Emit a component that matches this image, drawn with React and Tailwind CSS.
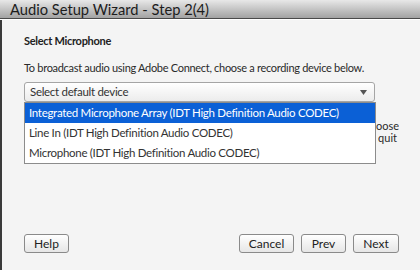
export default function App() {
  const items = [
    "Integrated Microphone Array (IDT High Definition Audio CODEC)",
    "Line In (IDT High Definition Audio CODEC)",
    "Microphone (IDT High Definition Audio CODEC)",
  ];

  return (
    <div
      className="w-[420px] h-[270px] flex flex-col bg-[#f4f4f4] text-[#2a2a2a] overflow-hidden"
      style={{ fontFamily: "Lato, 'Open Sans', sans-serif" }}
    >
      {/* Title bar */}
      <div className="h-[19px] shrink-0 flex items-center pl-[10px] bg-gradient-to-b from-[#e8e8e8] to-[#a3a3a3] border-b border-[#4a4a4a]">
        <span className="text-[14.7px] leading-none text-[#1c1c1c]">Audio Setup Wizard - Step 2(4)</span>
      </div>
      <div className="h-px bg-white shrink-0"></div>

      <div className="flex-1 flex">
        <div className="w-[2px] bg-[#3a3a3a]"></div>

        <div className="flex-1 flex flex-col pl-[22px] pr-[21px] pt-[14px] pb-[17px]">
          <div className="text-[11px] leading-[14px] font-bold tracking-[-0.3px] text-[#222]">Select Microphone</div>

          <div className="mt-[13px] text-[11px] leading-[14px] tracking-[-0.3px]">
            To broadcast audio using Adobe Connect, choose a recording device below.
          </div>

          <div className="relative mt-[7px] w-[351px]">
            <div className="h-[20px] flex items-center justify-between pl-[5px] pr-[7px] border border-[#a5a5a5] rounded-[3px] bg-gradient-to-b from-white to-[#ececec]">
              <span className="text-[11.5px] leading-none tracking-[-0.3px] text-[#333]">Select default device</span>
              <svg width="7" height="5" viewBox="0 0 7 5">
                <path d="M0 0H7L3.5 5Z" fill="#555" />
              </svg>
            </div>

            {/* Open list */}
            <div className="absolute left-0 top-full w-[352px] border border-[#8c8c8c] bg-white z-10">
              {items.map((item, i) => (
                <div
                  key={item}
                  className={
                    i === 0
                      ? "h-[20px] flex items-center pl-[4px] text-[11.5px] tracking-[-0.3px] bg-[#0b60d6] text-white"
                      : "h-[20px] flex items-center pl-[4px] text-[11.5px] tracking-[-0.3px] text-[#333]"
                  }
                >
                  {item}
                </div>
              ))}
            </div>
          </div>

          <div className="mt-[18px] text-[11px] leading-[12px] whitespace-nowrap overflow-hidden">
            <div className="text-right">If your device is not in the list, connect it and choose</div>
            <div className="text-right pr-[2px]">Next to continue, or Cancel to quit</div>
          </div>

          <div className="mt-auto flex items-center">
            <button className="w-[45px] h-[19px] border border-[#8a8a8a] rounded-[3px] bg-gradient-to-b from-white to-[#e6e6e6] text-[12px] leading-none text-[#222]">
              Help
            </button>
            <div className="ml-auto flex gap-[7px]">
              <button className="w-[55px] h-[19px] border border-[#8a8a8a] rounded-[3px] bg-gradient-to-b from-white to-[#e6e6e6] text-[12px] leading-none text-[#222]">
                Cancel
              </button>
              <button className="w-[45px] h-[19px] border border-[#8a8a8a] rounded-[3px] bg-gradient-to-b from-white to-[#e6e6e6] text-[12px] leading-none text-[#222]">
                Prev
              </button>
              <button className="w-[46px] h-[19px] border border-[#8a8a8a] rounded-[3px] bg-gradient-to-b from-white to-[#e6e6e6] text-[12px] leading-none text-[#222]">
                Next
              </button>
            </div>
          </div>
        </div>
      </div>
    </div>
  );
}
